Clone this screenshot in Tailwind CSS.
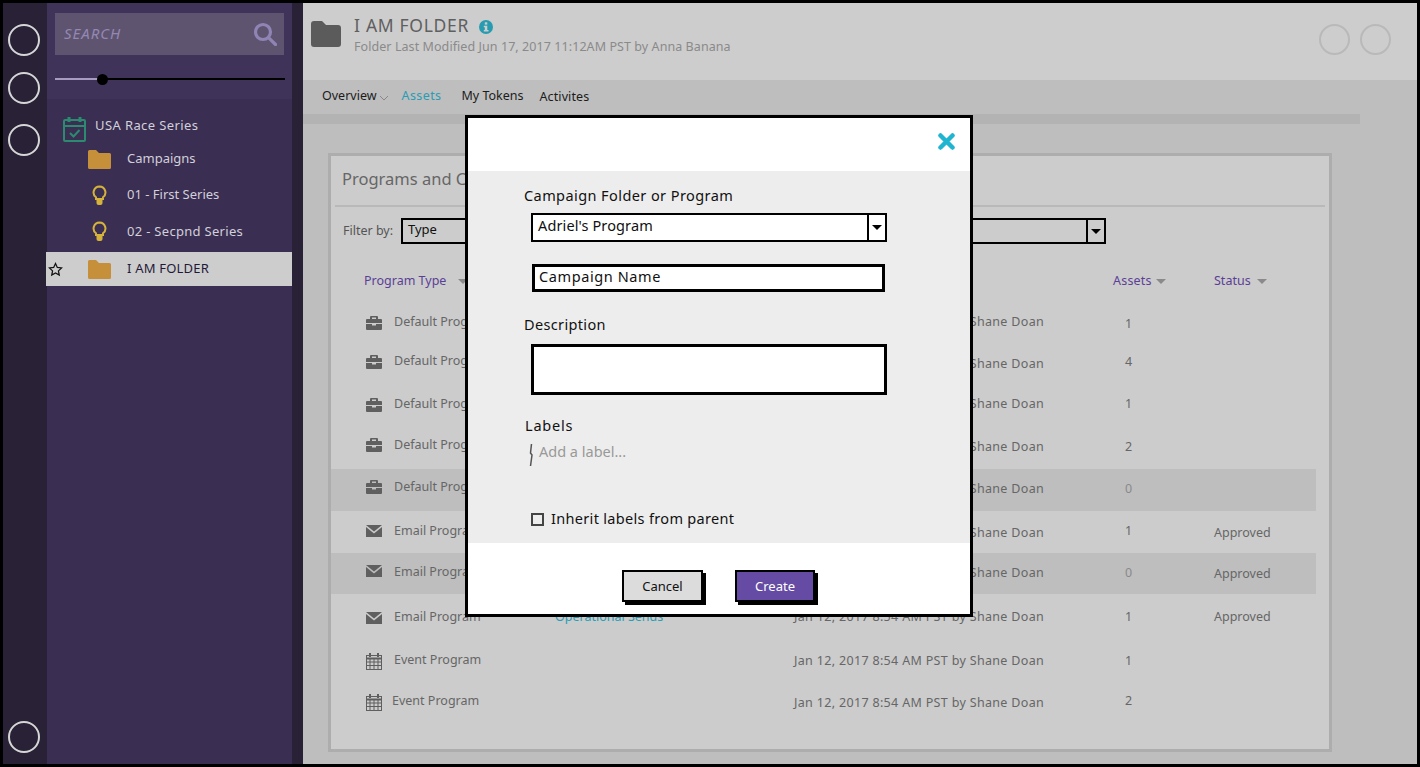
<!DOCTYPE html>
<html lang="en">
<head>
    <meta charset="UTF-8">
    <title>I AM FOLDER</title>
    <script src="https://cdn.jsdelivr.net/npm/@tailwindcss/browser@4"></script>
</head>
<body class="bg-black">
<div class="relative w-[1420px] h-[767px] overflow-hidden border-x-[3px] border-t-[3px] border-b-[3px] border-black flex font-['Noto_Sans',sans-serif] text-[13px] text-[#666]">

    <!-- rail -->
    <div class="w-[44px] shrink-0 bg-[#292136] flex flex-col items-center pt-[21px] pb-[11px] pr-[2px]">
        <div class="w-[32px] h-[32px] rounded-full border-2 border-[#d6d6d6]"></div>
        <div class="w-[32px] h-[32px] rounded-full border-2 border-[#d6d6d6] mt-[16px]"></div>
        <div class="w-[32px] h-[32px] rounded-full border-2 border-[#d6d6d6] mt-[20px]"></div>
        <div class="w-[32px] h-[32px] rounded-full border-2 border-[#d6d6d6] mt-auto"></div>
    </div>

    <!-- sidebar -->
    <div class="w-[245px] shrink-0 bg-[#3a2e52] flex flex-col">
        <div class="h-[96px] bg-[#403359] pt-[10px] pl-[8px]">
            <div class="w-[229px] h-[42px] bg-[#5e5470] flex items-center justify-between pl-[9px] pr-[7px]">
                <span class="italic text-[#9488b3] text-[15px] tracking-[1px] -mt-[2px]">SEARCH</span>
                <svg class="w-[24px] h-[24px]" viewBox="0 0 24 24" fill="none" stroke="#8f84b4" stroke-width="3.2" stroke-linecap="round"><circle cx="10" cy="10" r="7.5"/><path d="M15.8 15.8 22.5 22.5"/></svg>
            </div>
            <div class="relative w-[230px] h-[12px] mt-[18px] flex items-center">
                <div class="w-[48px] h-[2px] bg-[#a79cc0]"></div>
                <div class="flex-1 h-[2px] bg-black"></div>
                <div class="absolute left-[42px] top-[0.5px] w-[11px] h-[11px] rounded-full bg-black"></div>
            </div>
        </div>
        <div class="pt-[13px] text-[#d2d0da]">
            <div class="flex items-center h-[29px] pl-[16px]">
                <svg class="w-[23px] h-[26px] shrink-0 mt-[4px]" viewBox="0 0 23 26" fill="none" stroke="#2c8a70" stroke-width="2"><rect x="1" y="4" width="21" height="21" rx="1"/><path d="M1 10h21" stroke-width="2"/><path d="M6 1v5M17 1v5" stroke-width="3"/><path d="M7 17l3.5 3.5L16.500 14" stroke-width="2"/></svg>
                <span class="ml-[9px] tracking-[0.4px] -mt-[2px]">USA Race Series</span>
            </div>
            <div class="flex items-center h-[36px] pl-[41px]">
                <svg class="w-[23px] h-[19px] shrink-0" viewBox="0 0 23 19" fill="#c68f3a"><path d="M1.500 0h6.500l3 3h10.500a1.500 1.500 0 0 1 1.500 1.500v13a1.500 1.500 0 0 1-1.500 1.500H1.500a1.500 1.500 0 0 1-1.500-1.500V1.500a1.500 1.500 0 0 1 1.500-1.500z"/></svg>
                <span class="ml-[16px]">Campaigns</span>
            </div>
            <div class="flex items-center h-[36px] pl-[45px]">
                <svg class="w-[15px] h-[21px] shrink-0" viewBox="0 0 15 21" fill="none" stroke="#d5b23c" stroke-width="2"><path d="M7.500 1.500a6 6 0 0 0-3.500 10.800V14h7v-1.700A6 6 0 0 0 7.500 1.500z"/><path d="M4.500 15h6v3a2 2 0 0 1-2 2h-2a2 2 0 0 1-2-2z" fill="#d5b23c" stroke="none"/></svg>
                <span class="ml-[20px]">01 - First Series</span>
            </div>
            <div class="flex items-center h-[37px] pl-[45px]">
                <svg class="w-[15px] h-[21px] shrink-0" viewBox="0 0 15 21" fill="none" stroke="#d5b23c" stroke-width="2"><path d="M7.500 1.500a6 6 0 0 0-3.500 10.800V14h7v-1.700A6 6 0 0 0 7.500 1.500z"/><path d="M4.500 15h6v3a2 2 0 0 1-2 2h-2a2 2 0 0 1-2-2z" fill="#d5b23c" stroke="none"/></svg>
                <span class="ml-[20px] tracking-[0.3px]">02 - Secpnd Series</span>
            </div>
            <div class="flex items-center h-[34px] -ml-[1px] bg-[#cdcdcd] text-[#1f1a3a] mt-[2px] pl-[2px]">
                <svg class="w-[15px] h-[15px] shrink-0" viewBox="0 0 24 24" fill="none" stroke="#111" stroke-width="2"><path d="M12 2.500l2.900 6.200 6.800.8-5 4.700 1.300 6.800-6-3.400-6 3.400 1.300-6.800-5-4.700 6.800-.8z"/></svg>
                <svg class="w-[23px] h-[19px] shrink-0 ml-[25px]" viewBox="0 0 23 19" fill="#c68f3a"><path d="M1.500 0h6.500l3 3h10.500a1.500 1.500 0 0 1 1.500 1.500v13a1.500 1.500 0 0 1-1.500 1.500H1.500a1.500 1.500 0 0 1-1.500-1.500V1.500a1.500 1.500 0 0 1 1.500-1.500z"/></svg>
                <span class="ml-[16px] tracking-[0.2px]">I AM FOLDER</span>
            </div>
        </div>
    </div>

    <div class="w-[11px] shrink-0 bg-[#292136]"></div>

    <!-- main -->
    <div class="flex-1 min-w-0 flex flex-col bg-[#bebebe]">
        <div class="h-[77px] shrink-0 bg-[#cdcdcd] flex items-start pl-[8px] pr-[26px] pt-[17px]">
            <svg class="w-[30px] h-[26px] shrink-0 mt-[1px]" viewBox="0 0 30 26" fill="#5b5b5b"><path d="M3 0h8l4 4h12a3 3 0 0 1 3 3v16a3 3 0 0 1-3 3H3a3 3 0 0 1-3-3V3a3 3 0 0 1 3-3z"/></svg>
            <div class="ml-[13px] -mt-[7px]">
                <div class="flex items-center h-[24px]">
                    <span class="text-[17.500px] text-[#5f5f5f] tracking-[0.7px]">I AM FOLDER</span>
                    <svg class="w-[14px] h-[14px] ml-[10px] mt-[3px]" viewBox="0 0 14 14"><circle cx="7" cy="7" r="7" fill="#279bb0"/><rect x="5.800" y="2.300" width="2.500" height="2.300" fill="#cdcdcd"/><path d="M4.800 5.700h3.500v4.300h1.200v1.500H4.800V10h1V7.200h-1z" fill="#cdcdcd"/></svg>
                </div>
                <div class="text-[12.500px] text-[#8a8a8a] mt-[1px] tracking-[0.07px]">Folder Last Modified Jun 17, 2017 11:12AM PST by Anna Banana</div>
            </div>
            <div class="ml-auto flex gap-[10px] mt-[4px]">
                <div class="w-[31px] h-[31px] rounded-full border-2 border-[#b9b9b9]"></div>
                <div class="w-[31px] h-[31px] rounded-full border-2 border-[#b9b9b9]"></div>
            </div>
        </div>

        <div class="h-[31px] shrink-0 flex items-center pl-[19px] pt-[2px] text-[#1c1c1c] text-[12.500px]">
            <span>Overview</span>
            <svg class="w-[10px] h-[6px] ml-[2px] mt-[3px]" viewBox="0 0 10 6" fill="none" stroke="#888" stroke-width="1"><path d="M1 1l4 4 4-4"/></svg>
            <span class="ml-[13px] text-[#2a9cb3] tracking-[0.4px]">Assets</span>
            <span class="ml-[20px]">My Tokens</span>
            <span class="ml-[16px] mt-[2px] tracking-[0.1px]">Activites</span>
        </div>

        <div class="h-[10px] w-[1057px] shrink-0 bg-[#b3b3b3] mt-[3px]"></div>

        <!-- programs card -->
        <div class="w-[1004px] h-[599px] ml-[25px] mt-[29px] shrink-0 border-[3px] border-[#adadad] bg-[#cccccc]">
            <div class="h-[51px] mx-[4px] border-b-2 border-[#b9b9b9] flex items-center pl-[7px] pb-[3px] text-[16.500px] text-[#666]">Programs and Campaigns</div>
            <div class="flex items-center h-[26px] mt-[11px] pl-[12px]">
                <span class="text-[#555] text-[12.500px] w-[58px]">Filter by:</span>
                <div class="w-[705px] h-[26px] border-2 border-black flex items-center justify-between pl-[5px] text-[#111]">
                    <span class="-mt-[2px]">Type</span>
                    <div class="w-[18px] h-full border-l-2 border-black flex items-center justify-center">
                        <div class="w-0 h-0 border-x-[5px] border-x-transparent border-t-[5px] border-t-black"></div>
                    </div>
                </div>
            </div>
            <div class="grid grid-cols-[28px_161px_239px_331px_89px_1fr] pl-[33px] items-center h-[26px] mt-[24px] text-[#5b3f96] text-[12.500px]">
                <div class="col-span-2 flex items-center">Program Type <span class="ml-[12px] w-0 h-0 border-x-[5px] border-x-transparent border-t-[5px] border-t-[#8a8a8a]"></span></div>
                <div></div>
                <div></div>
                <div class="ml-[-10px] flex items-center tracking-[0.2px]">Assets <span class="ml-[4px] w-0 h-0 border-x-[5px] border-x-transparent border-t-[5px] border-t-[#8a8a8a]"></span></div>
                <div class="ml-[2px] flex items-center">Status <span class="ml-[6px] w-0 h-0 border-x-[5px] border-x-transparent border-t-[5px] border-t-[#8a8a8a]"></span></div>
            </div>

            <div class="w-[985px] mt-[8px] text-[12.500px] text-[#666]">
                <div class="grid grid-cols-[28px_161px_239px_331px_89px_1fr] pl-[35px] items-center h-[41px]">
                    <svg class="w-[16px] h-[14px]" viewBox="0 0 16 14" fill="#5f5f5f"><path d="M5 0h6a1 1 0 0 1 1 1v2h3a1 1 0 0 1 1 1v3H0V4a1 1 0 0 1 1-1h3V1a1 1 0 0 1 1-1zm1 1.500V3h4V1.500z"/><path d="M0 8h6v1.500h4V8h6v5a1 1 0 0 1-1 1H1a1 1 0 0 1-1-1z"/></svg>
                    <span>Default Program</span><span></span>
                    <span class="tracking-[0.33px]">Jan 12, 2017 8:54 AM PST by Shane Doan</span><span class="mt-[4px]">1</span><span></span>
                </div>
                <div class="grid grid-cols-[28px_161px_239px_331px_89px_1fr] pl-[35px] items-center h-[41px]">
                    <svg class="w-[16px] h-[14px] -mt-[4px]" viewBox="0 0 16 14" fill="#5f5f5f"><path d="M5 0h6a1 1 0 0 1 1 1v2h3a1 1 0 0 1 1 1v3H0V4a1 1 0 0 1 1-1h3V1a1 1 0 0 1 1-1zm1 1.500V3h4V1.500z"/><path d="M0 8h6v1.500h4V8h6v5a1 1 0 0 1-1 1H1a1 1 0 0 1-1-1z"/></svg>
                    <span class="-mt-[4px]">Default Program</span><span></span>
                    <span class="mt-[2px] tracking-[0.33px]">Jan 12, 2017 8:54 AM PST by Shane Doan</span><span class="-mt-[2px]">4</span><span></span>
                </div>
                <div class="grid grid-cols-[28px_161px_239px_331px_89px_1fr] pl-[35px] items-center h-[41px]">
                    <svg class="w-[16px] h-[14px]" viewBox="0 0 16 14" fill="#5f5f5f"><path d="M5 0h6a1 1 0 0 1 1 1v2h3a1 1 0 0 1 1 1v3H0V4a1 1 0 0 1 1-1h3V1a1 1 0 0 1 1-1zm1 1.500V3h4V1.500z"/><path d="M0 8h6v1.500h4V8h6v5a1 1 0 0 1-1 1H1a1 1 0 0 1-1-1z"/></svg>
                    <span>Default Program</span><span></span>
                    <span class="tracking-[0.33px]">Jan 12, 2017 8:54 AM PST by Shane Doan</span><span>1</span><span></span>
                </div>
                <div class="grid grid-cols-[28px_161px_239px_331px_89px_1fr] pl-[35px] items-center h-[44px]">
                    <svg class="w-[16px] h-[14px] -mt-[4px]" viewBox="0 0 16 14" fill="#5f5f5f"><path d="M5 0h6a1 1 0 0 1 1 1v2h3a1 1 0 0 1 1 1v3H0V4a1 1 0 0 1 1-1h3V1a1 1 0 0 1 1-1zm1 1.500V3h4V1.500z"/><path d="M0 8h6v1.500h4V8h6v5a1 1 0 0 1-1 1H1a1 1 0 0 1-1-1z"/></svg>
                    <span class="-mt-[4px]">Default Program</span><span></span>
                    <span class="tracking-[0.33px]">Jan 12, 2017 8:54 AM PST by Shane Doan</span><span>2</span><span></span>
                </div>
                <div class="grid grid-cols-[28px_161px_239px_331px_89px_1fr] pl-[35px] items-center h-[42px] bg-[#bebebe]">
                    <svg class="w-[16px] h-[14px] -mt-[6px]" viewBox="0 0 16 14" fill="#5f5f5f"><path d="M5 0h6a1 1 0 0 1 1 1v2h3a1 1 0 0 1 1 1v3H0V4a1 1 0 0 1 1-1h3V1a1 1 0 0 1 1-1zm1 1.500V3h4V1.500z"/><path d="M0 8h6v1.500h4V8h6v5a1 1 0 0 1-1 1H1a1 1 0 0 1-1-1z"/></svg>
                    <span class="-mt-[6px]">Default Program</span><span></span>
                    <span class="-mt-[2px] tracking-[0.33px]">Jan 12, 2017 8:54 AM PST by Shane Doan</span><span class="-mt-[2px] text-[#8a8a8a]">0</span><span></span>
                </div>
                <div class="grid grid-cols-[28px_161px_239px_331px_89px_1fr] pl-[35px] items-center h-[42px]">
                    <svg class="w-[16px] h-[12px] -mt-[2px]" viewBox="0 0 16 12" fill="#5f5f5f"><path d="M0 0h16L8 6.500z"/><path d="M0 2l8 6.500L16 2v10H0z"/></svg>
                    <span class="-mt-[2px]">Email Program</span><span></span>
                    <span class="mt-[2px] tracking-[0.33px]">Jan 12, 2017 8:54 AM PST by Shane Doan</span><span class="-mt-[2px]">1</span><span class="mt-[2px]">Approved</span>
                </div>
                <div class="grid grid-cols-[28px_161px_239px_331px_89px_1fr] pl-[35px] items-center h-[41px] bg-[#bebebe]">
                    <svg class="w-[16px] h-[12px] -mt-[6px]" viewBox="0 0 16 12" fill="#5f5f5f"><path d="M0 0h16L8 6.500z"/><path d="M0 2l8 6.500L16 2v10H0z"/></svg>
                    <span class="-mt-[2px]">Email Program</span><span></span>
                    <span class="tracking-[0.33px]">Jan 12, 2017 8:54 AM PST by Shane Doan</span><span class="text-[#8a8a8a]">0</span><span class="mt-[2px]">Approved</span>
                </div>
                <div class="grid grid-cols-[28px_161px_239px_331px_89px_1fr] pl-[35px] items-center h-[46px]">
                    <svg class="w-[16px] h-[12px] mt-[2px]" viewBox="0 0 16 12" fill="#5f5f5f"><path d="M0 0h16L8 6.500z"/><path d="M0 2l8 6.500L16 2v10H0z"/></svg>
                    <span>Email Program</span><span class="text-[#2a9cb3]">Operational Sends</span>
                    <span class="tracking-[0.33px]">Jan 12, 2017 8:54 AM PST by Shane Doan</span><span>1</span><span>Approved</span>
                </div>
                <div class="grid grid-cols-[28px_161px_239px_331px_89px_1fr] pl-[35px] items-center h-[41px]">
                    <svg class="w-[16px] h-[17px] mt-[2px]" viewBox="0 0 16 17" fill="none" stroke="#5f5f5f" stroke-width="1"><rect x="0.500" y="2.500" width="15" height="14"/><path d="M0 5.500h16" stroke-width="2"/><path d="M0.500 9h15M0.500 12.500h15M4 6v10M8 6v10M12 6v10"/><path d="M4 0v4M12 0v4" stroke-width="2"/></svg>
                    <span>Event Program</span><span></span>
                    <span class="mt-[2px] tracking-[0.33px]">Jan 12, 2017 8:54 AM PST by Shane Doan</span><span class="mt-[2px]">1</span><span></span>
                </div>
                <div class="grid grid-cols-[28px_161px_239px_331px_89px_1fr] pl-[35px] items-center h-[42px]">
                    <svg class="w-[16px] h-[17px]" viewBox="0 0 16 17" fill="none" stroke="#5f5f5f" stroke-width="1"><rect x="0.500" y="2.500" width="15" height="14"/><path d="M0 5.500h16" stroke-width="2"/><path d="M0.500 9h15M0.500 12.500h15M4 6v10M8 6v10M12 6v10"/><path d="M4 0v4M12 0v4" stroke-width="2"/></svg>
                    <span class="-ml-[2px] -mt-[2px]">Event Program</span><span></span>
                    <span class="mt-[2px] tracking-[0.33px]">Jan 12, 2017 8:54 AM PST by Shane Doan</span><span class="-mt-[2px]">2</span><span></span>
                </div>
            </div>
        </div>
    </div>

    <!-- modal -->
    <div class="absolute left-[462px] top-[112px] w-[508px] h-[502px] border-[3px] border-black bg-white flex flex-col text-[#111]">
        <div class="h-[53px] shrink-0 flex justify-end pr-[15px] pt-[15px]">
            <svg class="w-[17px] h-[17px]" viewBox="0 0 17 17" fill="none" stroke="#1fb5d0" stroke-width="4.500" stroke-linecap="round"><path d="M2.500 2.500l12 12M14.500 2.500l-12 12"/></svg>
        </div>
        <div class="h-[372px] shrink-0 bg-[#ededed] pl-[56px] text-[14.500px]">
            <div class="h-[20px] mt-[15px] flex items-center tracking-[0.42px]">Campaign Folder or Program</div>
            <div class="w-[356px] h-[29px] ml-[7px] mt-[7px] bg-white border-2 border-black flex items-center justify-between pl-[5px]">
                <span class="-mt-[3px] tracking-[0.12px]">Adriel's Program</span>
                <div class="w-[18px] h-full border-l-2 border-black flex items-center justify-center">
                    <div class="w-0 h-0 border-x-[5px] border-x-transparent border-t-[5px] border-t-black"></div>
                </div>
            </div>
            <div class="w-[353px] h-[28px] ml-[8px] mt-[22px] bg-white border-[3px] border-black flex items-center pl-[4px]"><span class="-mt-[2px] tracking-[0.6px]">Campaign Name</span></div>
            <div class="h-[20px] mt-[23px] flex items-center tracking-[0.35px]">Description</div>
            <div class="w-[356px] h-[51px] ml-[7px] mt-[9px] bg-white border-[3px] border-black"></div>
            <div class="h-[20px] mt-[21px] ml-[1px] flex items-center tracking-[0.8px]">Labels</div>
            <div class="flex items-center h-[22px] ml-[5px] mt-[8px]">
                <svg class="w-[4px] h-[22px]" viewBox="0 0 4 22" fill="none" stroke="#555" stroke-width="1.500"><path d="M2.500 0 1.500 9l1.500 2-1.500 11"/></svg>
                <span class="ml-[6px] text-[#999] -mt-[6px]">Add a label...</span>
            </div>
            <div class="flex items-center h-[20px] ml-[7px] mt-[43px]">
                <div class="w-[13px] h-[13px] border-2 border-[#444]"></div>
                <span class="ml-[7px] tracking-[0.32px]">Inherit labels from parent</span>
            </div>
        </div>
        <div class="flex-1 flex items-start pl-[154px] pt-[27px] text-[13px]">
            <button class="w-[81px] h-[32px] pt-[2px] bg-[#dcdcdc] border-2 border-black shadow-[3px_3px_0_#000]">Cancel</button>
            <button class="w-[80px] h-[32px] pt-[2px] ml-[32px] bg-[#654ba3] border-2 border-black text-white shadow-[3px_3px_0_#000]">Create</button>
        </div>
    </div>
</div>
</body>
</html>
